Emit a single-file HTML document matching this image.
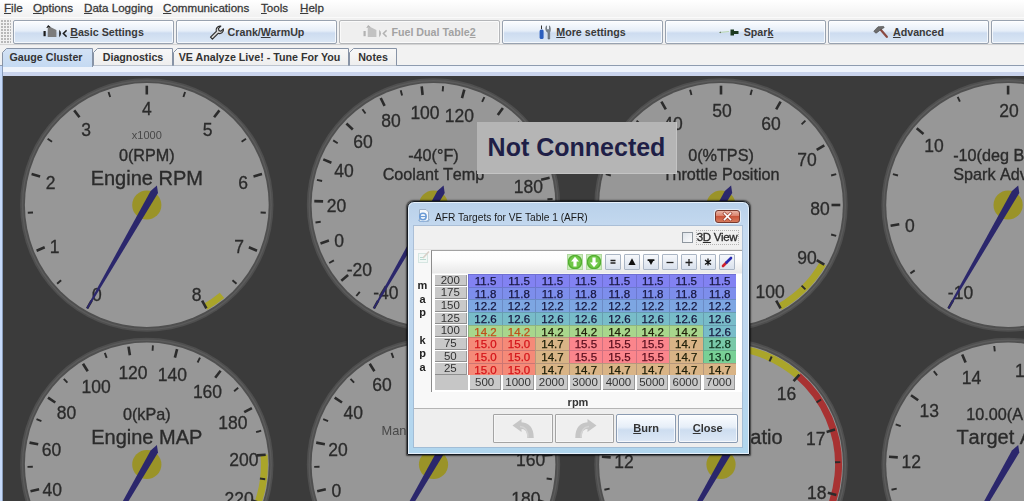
<!DOCTYPE html>
<html lang="en">
<head>
<meta charset="utf-8">
<title>TunerStudio - AFR Targets</title>
<style>
*{box-sizing:border-box;margin:0;padding:0}
html,body{width:1024px;height:501px;overflow:hidden;background:#f0f0f0;font-family:"Liberation Sans",Arial,sans-serif;}
body{position:relative}
u{text-decoration:underline;text-underline-offset:1px}
.abs{position:absolute}
/* menu bar */
#menubar{position:absolute;left:0;top:0;width:1024px;height:17px;background:linear-gradient(#ffffff,#f1f1f1);font-size:11.6px;color:#3a3a3a;-webkit-text-stroke:0.3px #3a3a3a}
#menubar span{position:absolute;top:1px;line-height:14px;white-space:nowrap}
/* toolbar */
#toolbar{position:absolute;left:0;top:17px;width:1024px;height:28px;background:#f1f1f1;border-top:1px solid #fafafa;border-bottom:1px solid #d4d4d4}
#grip{position:absolute;left:1px;top:2px;width:10px;height:24px;background-image:radial-gradient(circle at 1px 1px,#b8b8b8 0.8px,transparent 1px);background-size:3px 3px}
.tbtn{position:absolute;top:2px;height:24px;width:161px;border:1px solid #98a2b0;border-radius:2px;background:linear-gradient(#fbfdff 0%,#e6eef8 45%,#cddcf0 55%,#dbe7f5 100%);font-size:10.7px;font-weight:bold;color:#3a3a3a;line-height:22px;text-align:center;white-space:nowrap;box-shadow:inset 0 0 0 1px rgba(255,255,255,.7)}
.tbtn.dis{color:#a2a2a2;background:#efefef;border-color:#b4b6b9}
.tbtn{display:flex;align-items:center;justify-content:center}
.tbtn svg{flex:none}
/* tabs */
#tabs{position:absolute;left:0;top:46px;width:1024px;height:30px;background:#f2f2f2}
#tabline{position:absolute;left:0;top:19px;width:1024px;height:1px;background:#8e9cb0}
#tabband{position:absolute;left:0;top:20px;width:1024px;height:6px;background:#eef3fb}
#tabband2{position:absolute;left:0;top:26px;width:1024px;height:4px;background:#c9d3ec}
.tab{position:absolute;top:2px;height:18px;border:1px solid transparent;border-bottom:none;font-size:10.7px;font-weight:bold;color:#333;line-height:16px;text-align:center;white-space:nowrap}
.tab.sel{height:19px}
/* content */
#leftedge{position:absolute;left:0;top:66px;width:3px;height:435px;background:linear-gradient(to right,#c6dafa 0,#c6dafa 2px,#8a9dbb 2px)}
#content{position:absolute;left:3px;top:76px;width:1021px;height:425px;background:#3b3b3b;overflow:hidden}
#content svg{position:absolute;left:0;top:0}
#nc{position:absolute;left:477px;top:122px;width:200px;height:52px;background:#b5b5b5;border-right:1px solid #c4c4c4;border-bottom:1px solid #c4c4c4;color:#1f1f47;font-size:25px;font-weight:bold;line-height:50px;text-align:center;white-space:nowrap}
/* dialog */
#dlg{position:absolute;left:407px;top:201px;width:342.5px;height:253.5px;border:1px solid #161b22;border-radius:7px 7px 1px 1px;background:linear-gradient(#b9d1ea 0,#c6daf0 30px,#bcd6ee 60%,#b0d6ee 100%);box-shadow:0 0 1.5px 0.5px rgba(0,0,0,.6), inset 0 0 0 1px #e6f0fa}
#dlg .title{position:absolute;left:27px;top:6.500px;font-size:11.3px;color:#1a1a1a;line-height:16px;white-space:nowrap;transform-origin:0 0;transform:scaleX(.9)}
#xbtn{position:absolute;left:307px;top:8px;width:25px;height:13px;border:1px solid #7a3a2e;border-radius:3px;background:linear-gradient(#e9b5a6 0,#db826c 45%,#c9553b 50%,#d67a5c 100%);box-shadow:0 0 0 1px rgba(255,255,255,.55)}
#xbtn svg{position:absolute;left:-1px;top:-1px}
#client{position:absolute;left:6px;top:24px;width:328px;height:221px;background:#f0f0f0;box-shadow:0 0 0 1px rgba(150,170,195,.55);overflow:hidden}
</style>
</head>
<body>
<div id="menubar">
<span style="left:4px"><u>F</u>ile</span>
<span style="left:33px"><u>O</u>ptions</span>
<span style="left:84px"><u>D</u>ata Logging</span>
<span style="left:163px"><u>C</u>ommunications</span>
<span style="left:261px"><u>T</u>ools</span>
<span style="left:300px"><u>H</u>elp</span>
</div>
<div id="toolbar">
<div id="grip"></div>
<div class="tbtn" style="left:13px"><svg width="24" height="14" viewBox="0 0 24 14"><rect x="0.500" y="6" width="2.200" height="5.200" fill="#1c1c1c"/><path d="M4.700 12V4.800L5.300 0.900L13.400 5V12Z" fill="#7c7c7c"/><path d="M3.800 3L5.300 0.900L7.200 2.400" fill="none" stroke="#1c1c1c" stroke-width="1.100"/><path d="M16.200 4.800Q19.800 8.500 16.200 12.200Z" fill="#1c1c1c"/><path d="M23.600 5.400L20.400 8.500L23.600 11.600" fill="none" stroke="#1c1c1c" stroke-width="1.500"/></svg><span style="margin-left:3px"><u>B</u>asic Settings</span></div>
<div class="tbtn" style="left:176px"><svg width="16" height="16" viewBox="0 0 16 16"><path d="M1.5 13.2L7.3 7.4C6.3 4.6 8.6 1.6 11.8 2.2L9.4 4.6L10 6.6L12 7.2L14.4 4.8C15 8 12 10.300 9.200 9.300L3.400 15.100Z" fill="#d9d9d9" stroke="#2e2e2e" stroke-width="1.2" stroke-linejoin="round"/></svg><span style="margin-left:3px">Crank/<u>W</u>armUp</span></div>
<div class="tbtn dis" style="left:339px"><svg width="24" height="14" viewBox="0 0 24 14"><rect x="0.500" y="6" width="2.200" height="5.200" fill="#b2b2b2"/><path d="M4.700 12V4.800L5.300 0.900L13.400 5V12Z" fill="#c2c2c2"/><path d="M3.800 3L5.300 0.900L7.200 2.400" fill="none" stroke="#b2b2b2" stroke-width="1.100"/><path d="M16.200 4.800Q19.800 8.500 16.200 12.200Z" fill="#b2b2b2"/><path d="M23.600 5.400L20.400 8.500L23.600 11.600" fill="none" stroke="#b2b2b2" stroke-width="1.500"/></svg><span style="margin-left:4px">Fuel Dual Table<u>2</u></span></div>
<div class="tbtn" style="left:502px"><svg width="13" height="15" viewBox="0 0 13 15"><path d="M2.5 0.500V4" stroke="#333" stroke-width="1"/><rect x="0.6" y="4.500" width="4" height="9.500" rx="1.5" fill="#2c5fbe"/><path d="M9 14V7.500C6.500 6.500 6.200 3 7.500 0.800V4L9 5L10.500 4V0.800C11.800 3 11.500 6.500 10.700 7.500V14Z" fill="#7d8790" stroke="#4a525a" stroke-width="0.500"/></svg><span style="margin-left:4px"><u>M</u>ore settings</span></div>
<div class="tbtn" style="left:665px"><svg width="22" height="10" viewBox="0 0 22 10"><path d="M1.5 5.500L11 4.500" stroke="#b9d6b0" stroke-width="1.200"/><path d="M1 5.600L3 4.600V6.300Z" fill="#6b7a66"/><path d="M12.500 2.500H16V4H20.500V7H16V8.500H12.500Z" fill="#1d3a1f"/></svg><span style="margin-left:4px">Spar<u>k</u></span></div>
<div class="tbtn" style="left:828px"><svg width="15" height="14" viewBox="0 0 15 14"><path d="M7.500 4.500L13.800 11.800" stroke="#8a4a42" stroke-width="2.200" stroke-linecap="round"/><path d="M0.800 6.200L5 1.800L10.500 1.400L11.200 2.600L7.800 4.600L4.600 7.200L2.800 8.200Z" fill="#6d6d6d" stroke="#444" stroke-width="0.600"/></svg><span style="margin-left:5px"><u>A</u>dvanced</span></div>
<div class="tbtn" style="left:991px"></div>
</div>
<div id="tabs">
<div id="tabline"></div><div id="tabband"></div><div id="tabband2"></div>
<svg style="position:absolute;left:0;top:0" width="420" height="24" viewBox="0 0 420 24"><defs><linearGradient id="tsel" x1="0" y1="0" x2="0" y2="1"><stop offset="0" stop-color="#d3e2f5"/><stop offset="1" stop-color="#c4d9f2"/></linearGradient><linearGradient id="tun" x1="0" y1="0" x2="0" y2="1"><stop offset="0" stop-color="#f8f8f8"/><stop offset="1" stop-color="#eeeeee"/></linearGradient></defs><path d="M2.5 21V6.500L6.5 2.500H92.5V21" fill="url(#tsel)" stroke="#8793a6" stroke-width="1"/><path d="M93.5 19.5V6.500L97.5 2.500H172.5V19.5" fill="url(#tun)" stroke="#8793a6" stroke-width="1"/><path d="M173.5 19.5V6.500L177.5 2.500H348.5V19.5" fill="url(#tun)" stroke="#8793a6" stroke-width="1"/><path d="M349.5 19.5V6.500L353.5 2.500H396.5V19.5" fill="url(#tun)" stroke="#8793a6" stroke-width="1"/></svg>
<div class="tab sel" style="left:1px;width:90px">Gauge Cluster</div>
<div class="tab" style="left:93px;width:80px">Diagnostics</div>
<div class="tab" style="left:172px;width:175px">VE Analyze Live! - Tune For You</div>
<div class="tab" style="left:349px;width:48px">Notes</div>
</div>
<div id="leftedge"></div>
<div id="content">
<svg id="gauges" width="1021" height="425" viewBox="3 76 1021 425" font-family="'Liberation Sans', Arial, sans-serif" stroke-width="0" style="will-change:transform;font-kerning:none">
<circle cx="146.8" cy="205" r="126.7" fill="#4f4f4f"/>
<circle cx="146.8" cy="205" r="124.3" fill="none" stroke="#5b5b5b" stroke-width="1.4"/>
<circle cx="146.8" cy="205" r="121.9" fill="#979797"/>
<path d="M222.0 295.4A117.6 117.6 0 0 1 205.6 306.8" fill="none" stroke="#aaa52a" stroke-width="7"/>
<g stroke="#2b2b2b" stroke-linecap="butt"><line x1="91.6" y1="300.7" x2="87.2" y2="308.3" stroke-width="2.6"/><line x1="61.1" y1="280.2" x2="57.1" y2="283.7" stroke-width="1.9"/><line x1="44.7" y1="247.3" x2="36.6" y2="250.7" stroke-width="2.6"/><line x1="33.0" y1="212.5" x2="27.8" y2="212.8" stroke-width="1.9"/><line x1="40.1" y1="176.4" x2="31.6" y2="174.1" stroke-width="2.6"/><line x1="52.0" y1="141.7" x2="47.6" y2="138.7" stroke-width="1.9"/><line x1="79.5" y1="117.3" x2="74.2" y2="110.4" stroke-width="2.6"/><line x1="110.2" y1="97.0" x2="108.5" y2="92.0" stroke-width="1.9"/><line x1="146.8" y1="94.5" x2="146.8" y2="85.7" stroke-width="2.6"/><line x1="183.4" y1="97.0" x2="185.1" y2="92.0" stroke-width="1.9"/><line x1="214.1" y1="117.3" x2="219.4" y2="110.4" stroke-width="2.6"/><line x1="241.6" y1="141.7" x2="246.0" y2="138.7" stroke-width="1.9"/><line x1="253.5" y1="176.4" x2="262.0" y2="174.1" stroke-width="2.6"/><line x1="260.6" y1="212.5" x2="265.8" y2="212.8" stroke-width="1.9"/><line x1="248.9" y1="247.3" x2="257.0" y2="250.7" stroke-width="2.6"/><line x1="232.5" y1="280.2" x2="236.5" y2="283.7" stroke-width="1.9"/><line x1="202.1" y1="300.7" x2="206.4" y2="308.3" stroke-width="2.6"/></g>
<g font-size="17.5" text-anchor="middle" fill="#2b2b2b" stroke="#2b2b2b" stroke-width="0.3"><text x="96.9" y="301.0">0</text><text x="54.6" y="252.8">1</text><text x="50.5" y="188.8">2</text><text x="86.1" y="135.5">3</text><text x="146.8" y="114.9">4</text><text x="207.5" y="135.5">5</text><text x="243.1" y="188.8">6</text><text x="239.0" y="252.8">7</text><text x="196.7" y="301.0">8</text></g>
<text x="146.8" y="138.8" font-size="11" text-anchor="middle" fill="#484848">x1000</text>
<text x="146.8" y="160.8" font-size="16.2" text-anchor="middle" fill="#2b2b2b" stroke="#2b2b2b" stroke-width="0.35">0(RPM)</text>
<text x="146.8" y="184.7" font-size="20" text-anchor="middle" fill="#2b2b2b" stroke="#2b2b2b" stroke-width="0.35">Engine RPM</text>
<circle cx="146.8" cy="205" r="14.6" fill="#9a9328"/>
<polygon points="86.4,308.1 150.6,191.0 156.9,185.4 158.0,193.0 87.7,308.9" fill="#2b276c"/>
<circle cx="433.5" cy="205" r="126.7" fill="#4f4f4f"/>
<circle cx="433.5" cy="205" r="124.3" fill="none" stroke="#5b5b5b" stroke-width="1.4"/>
<circle cx="433.5" cy="205" r="121.9" fill="#979797"/>
<g stroke="#2b2b2b" stroke-linecap="butt"><line x1="378.2" y1="300.7" x2="373.9" y2="308.3" stroke-width="2.6"/><line x1="359.8" y1="291.9" x2="356.3" y2="296.0" stroke-width="1.9"/><line x1="348.1" y1="275.1" x2="341.3" y2="280.7" stroke-width="2.6"/><line x1="333.9" y1="260.4" x2="329.2" y2="263.0" stroke-width="1.9"/><line x1="328.9" y1="240.5" x2="320.5" y2="243.4" stroke-width="2.6"/><line x1="320.7" y1="221.8" x2="315.5" y2="222.5" stroke-width="1.9"/><line x1="323.1" y1="201.4" x2="314.3" y2="201.1" stroke-width="2.6"/><line x1="322.1" y1="181.0" x2="316.9" y2="179.9" stroke-width="1.9"/><line x1="331.4" y1="162.8" x2="323.3" y2="159.4" stroke-width="2.6"/><line x1="337.7" y1="143.3" x2="333.2" y2="140.4" stroke-width="1.9"/><line x1="352.8" y1="129.5" x2="346.4" y2="123.5" stroke-width="2.6"/><line x1="365.5" y1="113.5" x2="362.4" y2="109.2" stroke-width="1.9"/><line x1="384.6" y1="105.9" x2="380.7" y2="98.0" stroke-width="2.6"/><line x1="402.1" y1="95.4" x2="400.7" y2="90.3" stroke-width="1.9"/><line x1="422.6" y1="95.0" x2="421.7" y2="86.3" stroke-width="2.6"/><line x1="442.7" y1="91.4" x2="443.1" y2="86.1" stroke-width="1.9"/><line x1="462.0" y1="98.2" x2="464.3" y2="89.7" stroke-width="2.6"/><line x1="482.1" y1="101.9" x2="484.4" y2="97.1" stroke-width="1.9"/><line x1="497.8" y1="115.1" x2="502.9" y2="108.0" stroke-width="2.6"/><line x1="515.3" y1="125.6" x2="519.1" y2="121.9" stroke-width="1.9"/><line x1="525.3" y1="143.5" x2="532.6" y2="138.6" stroke-width="2.6"/><line x1="538.0" y1="159.5" x2="542.9" y2="157.4" stroke-width="1.9"/><line x1="541.1" y1="179.8" x2="549.6" y2="177.8" stroke-width="2.6"/><line x1="547.4" y1="199.3" x2="552.6" y2="199.0" stroke-width="1.9"/><line x1="543.1" y1="219.3" x2="551.8" y2="220.4" stroke-width="2.6"/><line x1="542.1" y1="239.7" x2="547.1" y2="241.3" stroke-width="1.9"/><line x1="531.0" y1="256.9" x2="538.8" y2="261.1" stroke-width="2.6"/><line x1="522.9" y1="275.7" x2="527.1" y2="279.0" stroke-width="1.9"/><line x1="506.5" y1="288.0" x2="512.3" y2="294.6" stroke-width="2.6"/><line x1="492.3" y1="302.7" x2="495.0" y2="307.2" stroke-width="1.9"/></g>
<g font-size="17.5" text-anchor="middle" fill="#2b2b2b" stroke="#2b2b2b" stroke-width="0.3"><text x="385.9" y="298.8">-40</text><text x="359.4" y="276.3">-20</text><text x="339.1" y="246.7">0</text><text x="336.5" y="211.5">20</text><text x="343.9" y="177.2">40</text><text x="362.9" y="147.7">60</text><text x="391.1" y="126.7">80</text><text x="425.0" y="118.7">100</text><text x="459.4" y="121.5">120</text><text x="490.6" y="136.2">140</text><text x="514.6" y="161.0">160</text><text x="528.4" y="192.7">180</text><text x="530.1" y="227.1">200</text><text x="519.6" y="260.0">220</text><text x="498.2" y="287.1">240</text></g>
<text x="433.5" y="160.8" font-size="16.2" text-anchor="middle" fill="#2b2b2b" stroke="#2b2b2b" stroke-width="0.35">-40(°F)</text>
<text x="433.5" y="179.8" font-size="16.2" text-anchor="middle" fill="#2b2b2b" stroke="#2b2b2b" stroke-width="0.35">Coolant Temp</text>
<circle cx="433.5" cy="205" r="14.6" fill="#9a9328"/>
<polygon points="373.1,308.1 437.3,191.0 443.6,185.4 444.7,193.0 374.4,308.9" fill="#2b276c"/>
<circle cx="721.0" cy="205" r="126.7" fill="#4f4f4f"/>
<circle cx="721.0" cy="205" r="124.3" fill="none" stroke="#5b5b5b" stroke-width="1.4"/>
<circle cx="721.0" cy="205" r="121.9" fill="#979797"/>
<path d="M822.8 263.8A117.6 117.6 0 0 1 779.8 306.8" fill="none" stroke="#aaa52a" stroke-width="7"/>
<g stroke="#2b2b2b" stroke-linecap="butt"><line x1="665.8" y1="300.7" x2="661.4" y2="308.3" stroke-width="2.6"/><line x1="640.4" y1="285.6" x2="636.6" y2="289.4" stroke-width="1.9"/><line x1="625.3" y1="260.2" x2="617.7" y2="264.6" stroke-width="2.6"/><line x1="610.9" y1="234.5" x2="605.8" y2="235.9" stroke-width="1.9"/><line x1="610.5" y1="205.0" x2="601.7" y2="205.0" stroke-width="2.6"/><line x1="610.9" y1="175.5" x2="605.8" y2="174.1" stroke-width="1.9"/><line x1="625.3" y1="149.8" x2="617.7" y2="145.3" stroke-width="2.6"/><line x1="640.4" y1="124.4" x2="636.6" y2="120.6" stroke-width="1.9"/><line x1="665.8" y1="109.3" x2="661.4" y2="101.7" stroke-width="2.6"/><line x1="691.5" y1="94.9" x2="690.1" y2="89.8" stroke-width="1.9"/><line x1="721.0" y1="94.5" x2="721.0" y2="85.7" stroke-width="2.6"/><line x1="750.5" y1="94.9" x2="751.9" y2="89.8" stroke-width="1.9"/><line x1="776.2" y1="109.3" x2="780.6" y2="101.7" stroke-width="2.6"/><line x1="801.6" y1="124.4" x2="805.4" y2="120.6" stroke-width="1.9"/><line x1="816.7" y1="149.8" x2="824.3" y2="145.3" stroke-width="2.6"/><line x1="831.1" y1="175.5" x2="836.2" y2="174.1" stroke-width="1.9"/><line x1="831.5" y1="205.0" x2="840.3" y2="205.0" stroke-width="2.6"/><line x1="831.1" y1="234.5" x2="836.2" y2="235.9" stroke-width="1.9"/><line x1="816.7" y1="260.2" x2="824.3" y2="264.6" stroke-width="2.6"/><line x1="801.6" y1="285.6" x2="805.4" y2="289.4" stroke-width="1.9"/><line x1="776.2" y1="300.7" x2="780.6" y2="308.3" stroke-width="2.6"/></g>
<g font-size="17.5" text-anchor="middle" fill="#2b2b2b" stroke="#2b2b2b" stroke-width="0.3"><text x="671.1" y="301.0">0</text><text x="637.1" y="263.7">10</text><text x="623.9" y="214.7">20</text><text x="637.1" y="165.6">30</text><text x="673.0" y="129.7">40</text><text x="722.0" y="116.6">50</text><text x="771.0" y="129.7">60</text><text x="806.9" y="165.6">70</text><text x="820.1" y="214.7">80</text><text x="806.9" y="263.7">90</text><text x="770.2" y="298.2">100</text></g>
<text x="721.0" y="160.8" font-size="16.2" text-anchor="middle" fill="#2b2b2b" stroke="#2b2b2b" stroke-width="0.35">0(%TPS)</text>
<text x="721.0" y="179.8" font-size="16.2" text-anchor="middle" fill="#2b2b2b" stroke="#2b2b2b" stroke-width="0.35">Throttle Position</text>
<circle cx="721.0" cy="205" r="14.6" fill="#9a9328"/>
<polygon points="660.6,308.1 724.8,191.0 731.1,185.4 732.2,193.0 661.9,308.9" fill="#2b276c"/>
<circle cx="1008.1" cy="205" r="126.7" fill="#4f4f4f"/>
<circle cx="1008.1" cy="205" r="124.3" fill="none" stroke="#5b5b5b" stroke-width="1.4"/>
<circle cx="1008.1" cy="205" r="121.9" fill="#979797"/>
<g stroke="#2b2b2b" stroke-linecap="butt"><line x1="952.9" y1="300.7" x2="948.5" y2="308.3" stroke-width="2.6"/><line x1="914.7" y1="270.4" x2="910.4" y2="273.4" stroke-width="1.9"/><line x1="899.3" y1="224.2" x2="890.6" y2="225.7" stroke-width="2.6"/><line x1="898.0" y1="175.5" x2="892.9" y2="174.1" stroke-width="1.9"/><line x1="923.5" y1="134.0" x2="916.7" y2="128.3" stroke-width="2.6"/><line x1="959.9" y1="101.7" x2="957.7" y2="96.9" stroke-width="1.9"/><line x1="1008.1" y1="94.5" x2="1008.1" y2="85.7" stroke-width="2.6"/><line x1="1056.3" y1="101.7" x2="1058.5" y2="96.9" stroke-width="1.9"/><line x1="1092.7" y1="134.0" x2="1099.5" y2="128.3" stroke-width="2.6"/><line x1="1118.2" y1="175.5" x2="1123.3" y2="174.1" stroke-width="1.9"/><line x1="1116.9" y1="224.2" x2="1125.6" y2="225.7" stroke-width="2.6"/><line x1="1101.5" y1="270.4" x2="1105.8" y2="273.4" stroke-width="1.9"/><line x1="1063.3" y1="300.7" x2="1067.8" y2="308.3" stroke-width="2.6"/></g>
<g font-size="17.5" text-anchor="middle" fill="#2b2b2b" stroke="#2b2b2b" stroke-width="0.3"><text x="960.5" y="298.8">-10</text><text x="909.9" y="232.0">0</text><text x="934.0" y="151.6">10</text><text x="1009.1" y="116.6">20</text><text x="1084.2" y="151.6">30</text><text x="1105.7" y="231.7">40</text><text x="1058.1" y="299.6">50</text></g>
<text x="1008.1" y="160.8" font-size="16.2" text-anchor="middle" fill="#2b2b2b" stroke="#2b2b2b" stroke-width="0.35">-10(deg BTDC)</text>
<text x="1008.1" y="179.8" font-size="16.2" text-anchor="middle" fill="#2b2b2b" stroke="#2b2b2b" stroke-width="0.35">Spark Advance</text>
<circle cx="1008.1" cy="205" r="14.6" fill="#9a9328"/>
<polygon points="947.7,308.1 1011.9,191.0 1018.2,185.4 1019.3,193.0 949.0,308.9" fill="#2b276c"/>
<circle cx="146.8" cy="464.5" r="126.7" fill="#4f4f4f"/>
<circle cx="146.8" cy="464.5" r="124.3" fill="none" stroke="#5b5b5b" stroke-width="1.4"/>
<circle cx="146.8" cy="464.5" r="121.9" fill="#979797"/>
<path d="M264.0 454.9A117.6 117.6 0 0 1 215.7 559.8" fill="none" stroke="#aaa52a" stroke-width="7"/>
<g stroke="#2b2b2b" stroke-linecap="butt"><line x1="91.6" y1="560.2" x2="87.2" y2="567.8" stroke-width="2.6"/><line x1="70.9" y1="549.5" x2="67.3" y2="553.5" stroke-width="1.9"/><line x1="57.9" y1="530.2" x2="50.9" y2="535.4" stroke-width="2.6"/><line x1="43.2" y1="512.1" x2="38.4" y2="514.4" stroke-width="1.9"/><line x1="39.1" y1="489.2" x2="30.5" y2="491.2" stroke-width="2.6"/><line x1="32.8" y1="466.8" x2="27.5" y2="466.9" stroke-width="1.9"/><line x1="38.2" y1="444.2" x2="29.5" y2="442.6" stroke-width="2.6"/><line x1="41.4" y1="421.1" x2="36.5" y2="419.1" stroke-width="1.9"/><line x1="55.3" y1="402.5" x2="48.0" y2="397.6" stroke-width="2.6"/><line x1="67.4" y1="382.7" x2="63.8" y2="378.9" stroke-width="1.9"/><line x1="87.7" y1="371.2" x2="83.0" y2="363.7" stroke-width="2.6"/><line x1="106.7" y1="357.8" x2="104.8" y2="352.8" stroke-width="1.9"/><line x1="129.9" y1="355.3" x2="128.5" y2="346.6" stroke-width="2.6"/><line x1="152.6" y1="350.7" x2="152.9" y2="345.4" stroke-width="1.9"/><line x1="174.9" y1="357.6" x2="177.1" y2="349.1" stroke-width="2.6"/><line x1="197.6" y1="362.5" x2="200.0" y2="357.7" stroke-width="1.9"/><line x1="215.2" y1="377.7" x2="220.6" y2="370.8" stroke-width="2.6"/><line x1="234.1" y1="391.2" x2="238.2" y2="387.8" stroke-width="1.9"/><line x1="244.2" y1="412.2" x2="251.9" y2="408.1" stroke-width="2.6"/><line x1="256.1" y1="432.2" x2="261.2" y2="430.7" stroke-width="1.9"/><line x1="256.9" y1="455.4" x2="265.7" y2="454.7" stroke-width="2.6"/><line x1="259.9" y1="478.5" x2="265.2" y2="479.2" stroke-width="1.9"/><line x1="251.4" y1="500.2" x2="259.7" y2="503.0" stroke-width="2.6"/><line x1="244.9" y1="522.5" x2="249.5" y2="525.2" stroke-width="1.9"/><line x1="228.5" y1="538.9" x2="235.0" y2="544.9" stroke-width="2.6"/><line x1="213.6" y1="556.9" x2="216.7" y2="561.2" stroke-width="1.9"/></g>
<g font-size="17.5" text-anchor="middle" fill="#2b2b2b" stroke="#2b2b2b" stroke-width="0.3"><text x="96.9" y="560.5">0</text><text x="68.9" y="532.5">20</text><text x="52.2" y="496.1">40</text><text x="51.4" y="456.1">60</text><text x="66.6" y="419.1">80</text><text x="96.2" y="392.7">100</text><text x="133.0" y="378.9">120</text><text x="172.3" y="380.9">140</text><text x="207.5" y="398.4">160</text><text x="232.8" y="428.5">180</text><text x="243.9" y="466.3">200</text><text x="239.1" y="505.3">220</text><text x="219.1" y="539.1">240</text></g>
<text x="146.8" y="420.3" font-size="16.2" text-anchor="middle" fill="#2b2b2b" stroke="#2b2b2b" stroke-width="0.35">0(kPa)</text>
<text x="146.8" y="443.5" font-size="20" text-anchor="middle" fill="#2b2b2b" stroke="#2b2b2b" stroke-width="0.35">Engine MAP</text>
<circle cx="146.8" cy="464.5" r="14.6" fill="#9a9328"/>
<polygon points="86.4,567.6 150.6,450.5 156.9,444.9 158.0,452.5 87.7,568.4" fill="#2b276c"/>
<circle cx="433.5" cy="464.5" r="126.7" fill="#4f4f4f"/>
<circle cx="433.5" cy="464.5" r="124.3" fill="none" stroke="#5b5b5b" stroke-width="1.4"/>
<circle cx="433.5" cy="464.5" r="121.9" fill="#979797"/>
<g stroke="#2b2b2b" stroke-linecap="butt"><line x1="378.2" y1="560.2" x2="373.9" y2="567.8" stroke-width="2.6"/><line x1="357.6" y1="549.5" x2="354.0" y2="553.5" stroke-width="1.9"/><line x1="344.6" y1="530.2" x2="337.6" y2="535.4" stroke-width="2.6"/><line x1="329.9" y1="512.1" x2="325.1" y2="514.4" stroke-width="1.9"/><line x1="325.8" y1="489.2" x2="317.2" y2="491.2" stroke-width="2.6"/><line x1="319.5" y1="466.8" x2="314.2" y2="466.9" stroke-width="1.9"/><line x1="324.9" y1="444.2" x2="316.2" y2="442.6" stroke-width="2.6"/><line x1="328.1" y1="421.1" x2="323.2" y2="419.1" stroke-width="1.9"/><line x1="342.0" y1="402.5" x2="334.7" y2="397.6" stroke-width="2.6"/><line x1="354.1" y1="382.7" x2="350.5" y2="378.9" stroke-width="1.9"/><line x1="374.4" y1="371.2" x2="369.7" y2="363.7" stroke-width="2.6"/><line x1="393.4" y1="357.8" x2="391.5" y2="352.8" stroke-width="1.9"/><line x1="416.6" y1="355.3" x2="415.2" y2="346.6" stroke-width="2.6"/><line x1="439.3" y1="350.7" x2="439.6" y2="345.4" stroke-width="1.9"/><line x1="461.6" y1="357.6" x2="463.8" y2="349.1" stroke-width="2.6"/><line x1="484.3" y1="362.5" x2="486.7" y2="357.7" stroke-width="1.9"/><line x1="501.9" y1="377.7" x2="507.3" y2="370.8" stroke-width="2.6"/><line x1="520.8" y1="391.2" x2="524.9" y2="387.8" stroke-width="1.9"/><line x1="530.9" y1="412.2" x2="538.6" y2="408.1" stroke-width="2.6"/><line x1="542.8" y1="432.2" x2="547.9" y2="430.7" stroke-width="1.9"/><line x1="543.6" y1="455.4" x2="552.4" y2="454.7" stroke-width="2.6"/><line x1="546.6" y1="478.5" x2="551.9" y2="479.2" stroke-width="1.9"/><line x1="538.1" y1="500.2" x2="546.4" y2="503.0" stroke-width="2.6"/><line x1="531.6" y1="522.5" x2="536.2" y2="525.2" stroke-width="1.9"/><line x1="515.2" y1="538.9" x2="521.7" y2="544.9" stroke-width="2.6"/><line x1="500.3" y1="556.9" x2="503.4" y2="561.2" stroke-width="1.9"/></g>
<g font-size="17.5" text-anchor="middle" fill="#2b2b2b" stroke="#2b2b2b" stroke-width="0.3"><text x="385.9" y="558.3">-40</text><text x="356.4" y="531.9">-20</text><text x="336.3" y="496.5">0</text><text x="338.1" y="456.1">20</text><text x="353.3" y="419.1">40</text><text x="382.0" y="391.3">60</text><text x="419.5" y="377.2">80</text><text x="459.0" y="380.9">100</text><text x="494.2" y="398.4">120</text><text x="519.5" y="428.5">140</text><text x="530.6" y="466.3">160</text><text x="525.8" y="505.3">180</text><text x="505.8" y="539.1">200</text></g>
<text x="433.5" y="420.3" font-size="16.2" text-anchor="middle" fill="#2b2b2b" stroke="#2b2b2b" stroke-width="0.35">-40(°F)</text>
<text x="433.5" y="435.0" font-size="12.8" text-anchor="middle" fill="#484848">Manifold Air Temp</text>
<circle cx="433.5" cy="464.5" r="14.6" fill="#9a9328"/>
<polygon points="373.1,567.6 437.3,450.5 443.6,444.9 444.7,452.5 374.4,568.4" fill="#2b276c"/>
<circle cx="721.0" cy="464.5" r="126.7" fill="#4f4f4f"/>
<circle cx="721.0" cy="464.5" r="124.3" fill="none" stroke="#5b5b5b" stroke-width="1.4"/>
<circle cx="721.0" cy="464.5" r="121.9" fill="#979797"/>
<path d="M739.9 348.4A117.6 117.6 0 0 1 798.3 375.9" fill="none" stroke="#aaa52a" stroke-width="7"/>
<path d="M798.3 375.9A117.6 117.6 0 0 1 779.8 566.3" fill="none" stroke="#a83232" stroke-width="7"/>
<g stroke="#2b2b2b" stroke-linecap="butt"><line x1="665.8" y1="560.2" x2="661.4" y2="567.8" stroke-width="2.6"/><line x1="639.1" y1="543.8" x2="635.3" y2="547.5" stroke-width="1.9"/><line x1="623.6" y1="516.6" x2="615.8" y2="520.8" stroke-width="2.6"/><line x1="609.6" y1="488.6" x2="604.4" y2="489.8" stroke-width="1.9"/><line x1="610.7" y1="457.4" x2="601.9" y2="456.8" stroke-width="2.6"/><line x1="613.6" y1="426.2" x2="608.6" y2="424.4" stroke-width="1.9"/><line x1="631.1" y1="400.3" x2="623.9" y2="395.2" stroke-width="2.6"/><line x1="650.0" y1="375.3" x2="646.7" y2="371.2" stroke-width="1.9"/><line x1="678.5" y1="362.5" x2="675.1" y2="354.4" stroke-width="2.6"/><line x1="707.7" y1="351.3" x2="707.1" y2="346.0" stroke-width="1.9"/><line x1="738.7" y1="355.4" x2="740.1" y2="346.7" stroke-width="2.6"/><line x1="769.5" y1="361.3" x2="771.7" y2="356.5" stroke-width="1.9"/><line x1="793.6" y1="381.2" x2="799.4" y2="374.6" stroke-width="2.6"/><line x1="816.6" y1="402.4" x2="821.1" y2="399.5" stroke-width="1.9"/><line x1="826.6" y1="432.1" x2="835.0" y2="429.5" stroke-width="2.6"/><line x1="835.0" y1="462.2" x2="840.3" y2="462.1" stroke-width="1.9"/><line x1="827.8" y1="492.7" x2="836.4" y2="494.9" stroke-width="2.6"/><line x1="819.0" y1="522.7" x2="823.6" y2="525.4" stroke-width="1.9"/><line x1="796.9" y1="544.8" x2="802.9" y2="551.2" stroke-width="2.6"/></g>
<g font-size="17.5" text-anchor="middle" fill="#2b2b2b" stroke="#2b2b2b" stroke-width="0.3"><text x="673.0" y="559.1">10</text><text x="635.5" y="520.4">11</text><text x="624.1" y="467.8">12</text><text x="642.2" y="417.1">13</text><text x="684.3" y="383.6">14</text><text x="737.7" y="377.3">15</text><text x="786.5" y="400.2">16</text><text x="815.8" y="445.4">17</text><text x="816.8" y="499.2">18</text><text x="789.4" y="545.5">19</text></g>
<text x="721.0" y="420.3" font-size="16.2" text-anchor="middle" fill="#2b2b2b" stroke="#2b2b2b" stroke-width="0.35">10.0(:1)</text>
<text x="722.0" y="444.2" font-size="20" text-anchor="middle" fill="#2b2b2b" stroke="#2b2b2b" stroke-width="0.35">Air:Fuel Ratio</text>
<circle cx="721.0" cy="464.5" r="14.6" fill="#9a9328"/>
<polygon points="660.6,567.6 724.8,450.5 731.1,444.9 732.2,452.5 661.9,568.4" fill="#2b276c"/>
<circle cx="1008.1" cy="464.5" r="126.7" fill="#4f4f4f"/>
<circle cx="1008.1" cy="464.5" r="124.3" fill="none" stroke="#5b5b5b" stroke-width="1.4"/>
<circle cx="1008.1" cy="464.5" r="121.9" fill="#979797"/>
<g stroke="#2b2b2b" stroke-linecap="butt"><line x1="952.9" y1="560.2" x2="948.5" y2="567.8" stroke-width="2.6"/><line x1="926.2" y1="543.8" x2="922.4" y2="547.5" stroke-width="1.9"/><line x1="910.7" y1="516.6" x2="902.9" y2="520.8" stroke-width="2.6"/><line x1="896.7" y1="488.6" x2="891.5" y2="489.8" stroke-width="1.9"/><line x1="897.8" y1="457.4" x2="889.0" y2="456.8" stroke-width="2.6"/><line x1="900.7" y1="426.2" x2="895.7" y2="424.4" stroke-width="1.9"/><line x1="918.2" y1="400.3" x2="911.0" y2="395.2" stroke-width="2.6"/><line x1="937.1" y1="375.3" x2="933.8" y2="371.2" stroke-width="1.9"/><line x1="965.6" y1="362.5" x2="962.2" y2="354.4" stroke-width="2.6"/><line x1="994.8" y1="351.3" x2="994.2" y2="346.0" stroke-width="1.9"/><line x1="1025.8" y1="355.4" x2="1027.2" y2="346.7" stroke-width="2.6"/><line x1="1056.6" y1="361.3" x2="1058.8" y2="356.5" stroke-width="1.9"/><line x1="1080.7" y1="381.2" x2="1086.5" y2="374.6" stroke-width="2.6"/><line x1="1103.7" y1="402.4" x2="1108.2" y2="399.5" stroke-width="1.9"/><line x1="1113.7" y1="432.1" x2="1122.1" y2="429.5" stroke-width="2.6"/><line x1="1122.1" y1="462.2" x2="1127.4" y2="462.1" stroke-width="1.9"/><line x1="1114.9" y1="492.7" x2="1123.5" y2="494.9" stroke-width="2.6"/><line x1="1106.1" y1="522.7" x2="1110.7" y2="525.4" stroke-width="1.9"/><line x1="1084.0" y1="544.8" x2="1090.0" y2="551.2" stroke-width="2.6"/></g>
<g font-size="17.5" text-anchor="middle" fill="#2b2b2b" stroke="#2b2b2b" stroke-width="0.3"><text x="960.1" y="559.1">10</text><text x="922.6" y="520.4">11</text><text x="911.2" y="467.8">12</text><text x="929.3" y="417.1">13</text><text x="971.4" y="383.6">14</text><text x="1024.8" y="377.3">15</text><text x="1073.6" y="400.2">16</text><text x="1102.9" y="445.4">17</text><text x="1103.9" y="499.2">18</text><text x="1076.5" y="545.5">19</text></g>
<text x="1008.1" y="420.3" font-size="16.2" text-anchor="middle" fill="#2b2b2b" stroke="#2b2b2b" stroke-width="0.35">10.00(AFR)</text>
<text x="1008.1" y="444.2" font-size="20" text-anchor="middle" fill="#2b2b2b" stroke="#2b2b2b" stroke-width="0.35">Target AFR</text>
<polygon points="947.7,567.6 1011.9,450.5 1018.2,444.9 1019.3,452.5 949.0,568.4" fill="#2b276c"/>
</svg>
</div>
<div id="nc">Not Connected</div>
<div id="dlg">
<svg style="position:absolute;left:9px;top:7px" width="14" height="14" viewBox="0 0 14 14"><path d="M2.500 0.500H9L11.500 3V12.500H2.500Z" fill="#f4f8fc" stroke="#9fb2c8"/><circle cx="6" cy="7.500" r="3.200" fill="none" stroke="#6b9bd6" stroke-width="1.500"/><path d="M3 7.500H9" stroke="#6b9bd6" stroke-width="1.100"/><path d="M1 11Q6 14.500 13 10.500" fill="none" stroke="#8fb4de" stroke-width="1"/></svg>
<div class="title">AFR Targets for VE Table 1 (AFR)</div>
<div id="xbtn"><svg width="25" height="13" viewBox="0 0 25 13"><path d="M9.500 3.500L15.500 9.500M15.500 3.500L9.500 9.500" stroke="#9a4030" stroke-width="3" stroke-linecap="square"/><path d="M9.500 3.500L15.500 9.500M15.500 3.500L9.500 9.500" stroke="#ffffff" stroke-width="1.600" stroke-linecap="square"/></svg></div>
<div id="client">
<div style="position:absolute;left:0.0px;top:23.0px;width:328.0px;height:159.0px;background:#f8f8f8;border-top:1px solid #e4e4e4"></div>
<div style="position:absolute;left:0.0px;top:182.0px;width:328.0px;height:40.0px;background:#eeeeee;border-top:1px solid #b4b4b4"></div>
<div style="position:absolute;left:268.0px;top:6.0px;width:11.0px;height:11.0px;border:1px solid #8f979f;background:linear-gradient(135deg,#dfe4ea,#fbfcfd)"></div>
<div style="position:absolute;left:281.5px;top:4.0px;width:43.0px;height:15.0px;border:1px dotted #b4b4b4;font-size:11.5px;letter-spacing:-0.3px;line-height:13px;color:#2a2a2a;-webkit-text-stroke:0.3px #2a2a2a;text-align:center;white-space:nowrap">3<u>D</u> View</div>
<svg style="position:absolute;left:3px;top:24px" width="14" height="14" viewBox="0 0 14 14"><rect x="1.5" y="3.5" width="9" height="9" fill="#f2f8f6" stroke="#d6e6e2"/><path d="M3 9.5h6M3 7.5h4" stroke="#b9d9d0" stroke-width="1"/><path d="M6 8L12 1.5" stroke="#d8cfc8" stroke-width="1.6"/></svg>
<div style="position:absolute;left:1.0px;top:51.8px;width:15.0px;height:14.0px;font-size:11px;font-weight:bold;color:#222;text-align:center;line-height:14px">m</div>
<div style="position:absolute;left:1.0px;top:65.5px;width:15.0px;height:14.0px;font-size:11px;font-weight:bold;color:#222;text-align:center;line-height:14px">a</div>
<div style="position:absolute;left:1.0px;top:79.2px;width:15.0px;height:14.0px;font-size:11px;font-weight:bold;color:#222;text-align:center;line-height:14px">p</div>
<div style="position:absolute;left:1.0px;top:106.6px;width:15.0px;height:14.0px;font-size:11px;font-weight:bold;color:#222;text-align:center;line-height:14px">k</div>
<div style="position:absolute;left:1.0px;top:119.7px;width:15.0px;height:14.0px;font-size:11px;font-weight:bold;color:#222;text-align:center;line-height:14px">p</div>
<div style="position:absolute;left:1.0px;top:133.6px;width:15.0px;height:14.0px;font-size:11px;font-weight:bold;color:#222;text-align:center;line-height:14px">a</div>
<div style="position:absolute;left:17.0px;top:24.0px;width:311.0px;height:142.0px;border-left:1px solid #8c8c8c;border-top:1px solid #a2a2a2;background:linear-gradient(#ffffff 0,#fdfdfd 8px,#e9e9e9 22px,#ffffff 23px)"></div>
<div style="position:absolute;left:153.0px;top:28.0px;width:16.0px;height:16.0px;border:1px solid #b0d8a0;overflow:hidden"><div style="position:absolute;left:-1px;top:-1px;width:16px;height:16px"><svg width="16" height="16" viewBox="0 0 16 16"><rect width="16" height="16" fill="#c9ecb8"/><circle cx="8" cy="8" r="6.6" fill="#70c848" stroke="#52ae30" stroke-width="1.3"/><path d="M8 2.8L12 7.4H9.6V12.6H6.4V7.4H4Z" fill="#fff"/></svg></div></div>
<div style="position:absolute;left:172.0px;top:28.0px;width:16.0px;height:16.0px;border:1px solid #b0d8a0;overflow:hidden"><div style="position:absolute;left:-1px;top:-1px;width:16px;height:16px"><svg width="16" height="16" viewBox="0 0 16 16"><rect width="16" height="16" fill="#c9ecb8"/><circle cx="8" cy="8" r="6.6" fill="#70c848" stroke="#52ae30" stroke-width="1.3"/><path d="M8 13.2L12 8.6H9.6V3.4H6.4V8.6H4Z" fill="#fff"/></svg></div></div>
<div style="position:absolute;left:191.0px;top:28.0px;width:16.0px;height:16.0px;border:1px solid #aab5c4;background:linear-gradient(#f6f8fb,#d9e1ed);overflow:hidden;border-radius:1px"><div style="position:absolute;left:-1px;top:-1px;width:16px;height:16px"><svg width="16" height="16" viewBox="0 0 16 16"><path d="M5.5 6.5h5M5.5 9h5" stroke="#222" stroke-width="1.3"/></svg></div></div>
<div style="position:absolute;left:210.0px;top:28.0px;width:16.0px;height:16.0px;border:1px solid #aab5c4;background:linear-gradient(#f6f8fb,#d9e1ed);overflow:hidden;border-radius:1px"><div style="position:absolute;left:-1px;top:-1px;width:16px;height:16px"><svg width="16" height="16" viewBox="0 0 16 16"><path d="M8 4.2L11.6 11H4.4Z" fill="#111"/></svg></div></div>
<div style="position:absolute;left:229.0px;top:28.0px;width:16.0px;height:16.0px;border:1px solid #aab5c4;background:linear-gradient(#f6f8fb,#d9e1ed);overflow:hidden;border-radius:1px"><div style="position:absolute;left:-1px;top:-1px;width:16px;height:16px"><svg width="16" height="16" viewBox="0 0 16 16"><path d="M4.6 5.2H11.4V7H10.2L8 11L5.8 7H4.6Z" fill="#111"/></svg></div></div>
<div style="position:absolute;left:248.0px;top:28.0px;width:16.0px;height:16.0px;border:1px solid #aab5c4;background:linear-gradient(#f6f8fb,#d9e1ed);overflow:hidden;border-radius:1px"><div style="position:absolute;left:-1px;top:-1px;width:16px;height:16px"><svg width="16" height="16" viewBox="0 0 16 16"><path d="M4.5 8.5h7" stroke="#222" stroke-width="1.3"/></svg></div></div>
<div style="position:absolute;left:267.0px;top:28.0px;width:16.0px;height:16.0px;border:1px solid #aab5c4;background:linear-gradient(#f6f8fb,#d9e1ed);overflow:hidden;border-radius:1px"><div style="position:absolute;left:-1px;top:-1px;width:16px;height:16px"><svg width="16" height="16" viewBox="0 0 16 16"><path d="M4.5 8.5h7M8 5v7" stroke="#222" stroke-width="1.3"/></svg></div></div>
<div style="position:absolute;left:286.0px;top:28.0px;width:16.0px;height:16.0px;border:1px solid #aab5c4;background:linear-gradient(#f6f8fb,#d9e1ed);overflow:hidden;border-radius:1px"><div style="position:absolute;left:-1px;top:-1px;width:16px;height:16px"><svg width="16" height="16" viewBox="0 0 16 16"><path d="M8 4.5v7M5 6l6 4.5M11 6l-6 4.5" stroke="#111" stroke-width="1.3"/></svg></div></div>
<div style="position:absolute;left:305.0px;top:28.0px;width:16.0px;height:16.0px;border:1px solid #aab5c4;background:linear-gradient(#f6f8fb,#d9e1ed);overflow:hidden;border-radius:1px"><div style="position:absolute;left:-1px;top:-1px;width:16px;height:16px"><svg width="16" height="16" viewBox="0 0 16 16"><path d="M4 12L7.5 8.5" stroke="#d0202c" stroke-width="2.6" stroke-linecap="round"/><path d="M7.5 8.5L12 4" stroke="#2a2ab0" stroke-width="2.6" stroke-linecap="round"/></svg></div></div>
<div style="position:absolute;left:20.6px;top:48.7px;width:32.4px;height:11.8px;background:#c9c9c9;border-right:1px solid #9a9a9a;border-bottom:1px solid #8f8f8f;font-size:11.5px;line-height:11.3px;color:#333;text-align:center">200</div>
<div style="position:absolute;left:54.3px;top:47.9px;width:33.5px;height:12.7px;background:#8282f2;border-left:1px solid rgba(40,40,90,.2);border-top:1px solid rgba(40,40,90,.2);font-size:11.5px;line-height:12.7px;color:#17173f;-webkit-text-stroke:0.25px #17173f;text-align:center">11.5</div>
<div style="position:absolute;left:87.8px;top:47.9px;width:33.5px;height:12.7px;background:#8282f2;border-left:1px solid rgba(40,40,90,.2);border-top:1px solid rgba(40,40,90,.2);font-size:11.5px;line-height:12.7px;color:#17173f;-webkit-text-stroke:0.25px #17173f;text-align:center">11.5</div>
<div style="position:absolute;left:121.2px;top:47.9px;width:33.5px;height:12.7px;background:#8282f2;border-left:1px solid rgba(40,40,90,.2);border-top:1px solid rgba(40,40,90,.2);font-size:11.5px;line-height:12.7px;color:#17173f;-webkit-text-stroke:0.25px #17173f;text-align:center">11.5</div>
<div style="position:absolute;left:154.6px;top:47.9px;width:33.5px;height:12.7px;background:#8282f2;border-left:1px solid rgba(40,40,90,.2);border-top:1px solid rgba(40,40,90,.2);font-size:11.5px;line-height:12.7px;color:#17173f;-webkit-text-stroke:0.25px #17173f;text-align:center">11.5</div>
<div style="position:absolute;left:188.1px;top:47.9px;width:33.5px;height:12.7px;background:#8282f2;border-left:1px solid rgba(40,40,90,.2);border-top:1px solid rgba(40,40,90,.2);font-size:11.5px;line-height:12.7px;color:#17173f;-webkit-text-stroke:0.25px #17173f;text-align:center">11.5</div>
<div style="position:absolute;left:221.5px;top:47.9px;width:33.5px;height:12.7px;background:#8282f2;border-left:1px solid rgba(40,40,90,.2);border-top:1px solid rgba(40,40,90,.2);font-size:11.5px;line-height:12.7px;color:#17173f;-webkit-text-stroke:0.25px #17173f;text-align:center">11.5</div>
<div style="position:absolute;left:255.0px;top:47.9px;width:33.5px;height:12.7px;background:#8282f2;border-left:1px solid rgba(40,40,90,.2);border-top:1px solid rgba(40,40,90,.2);font-size:11.5px;line-height:12.7px;color:#17173f;-webkit-text-stroke:0.25px #17173f;text-align:center">11.5</div>
<div style="position:absolute;left:288.5px;top:47.9px;width:33.5px;height:12.7px;background:#8282f2;border-left:1px solid rgba(40,40,90,.2);border-top:1px solid rgba(40,40,90,.2);font-size:11.5px;line-height:12.7px;color:#17173f;-webkit-text-stroke:0.25px #17173f;text-align:center">11.5</div>
<div style="position:absolute;left:20.6px;top:61.4px;width:32.4px;height:11.8px;background:#c9c9c9;border-right:1px solid #9a9a9a;border-bottom:1px solid #8f8f8f;font-size:11.5px;line-height:11.3px;color:#333;text-align:center">175</div>
<div style="position:absolute;left:54.3px;top:60.6px;width:33.5px;height:12.7px;background:#7d8eec;border-left:1px solid rgba(40,40,90,.2);border-top:1px solid rgba(40,40,90,.2);font-size:11.5px;line-height:12.7px;color:#17173f;-webkit-text-stroke:0.25px #17173f;text-align:center">11.8</div>
<div style="position:absolute;left:87.8px;top:60.6px;width:33.5px;height:12.7px;background:#7d8eec;border-left:1px solid rgba(40,40,90,.2);border-top:1px solid rgba(40,40,90,.2);font-size:11.5px;line-height:12.7px;color:#17173f;-webkit-text-stroke:0.25px #17173f;text-align:center">11.8</div>
<div style="position:absolute;left:121.2px;top:60.6px;width:33.5px;height:12.7px;background:#7d8eec;border-left:1px solid rgba(40,40,90,.2);border-top:1px solid rgba(40,40,90,.2);font-size:11.5px;line-height:12.7px;color:#17173f;-webkit-text-stroke:0.25px #17173f;text-align:center">11.8</div>
<div style="position:absolute;left:154.6px;top:60.6px;width:33.5px;height:12.7px;background:#7d8eec;border-left:1px solid rgba(40,40,90,.2);border-top:1px solid rgba(40,40,90,.2);font-size:11.5px;line-height:12.7px;color:#17173f;-webkit-text-stroke:0.25px #17173f;text-align:center">11.8</div>
<div style="position:absolute;left:188.1px;top:60.6px;width:33.5px;height:12.7px;background:#7d8eec;border-left:1px solid rgba(40,40,90,.2);border-top:1px solid rgba(40,40,90,.2);font-size:11.5px;line-height:12.7px;color:#17173f;-webkit-text-stroke:0.25px #17173f;text-align:center">11.8</div>
<div style="position:absolute;left:221.5px;top:60.6px;width:33.5px;height:12.7px;background:#7d8eec;border-left:1px solid rgba(40,40,90,.2);border-top:1px solid rgba(40,40,90,.2);font-size:11.5px;line-height:12.7px;color:#17173f;-webkit-text-stroke:0.25px #17173f;text-align:center">11.8</div>
<div style="position:absolute;left:255.0px;top:60.6px;width:33.5px;height:12.7px;background:#7d8eec;border-left:1px solid rgba(40,40,90,.2);border-top:1px solid rgba(40,40,90,.2);font-size:11.5px;line-height:12.7px;color:#17173f;-webkit-text-stroke:0.25px #17173f;text-align:center">11.8</div>
<div style="position:absolute;left:288.5px;top:60.6px;width:33.5px;height:12.7px;background:#7d8eec;border-left:1px solid rgba(40,40,90,.2);border-top:1px solid rgba(40,40,90,.2);font-size:11.5px;line-height:12.7px;color:#17173f;-webkit-text-stroke:0.25px #17173f;text-align:center">11.8</div>
<div style="position:absolute;left:20.6px;top:74.0px;width:32.4px;height:11.8px;background:#c9c9c9;border-right:1px solid #9a9a9a;border-bottom:1px solid #8f8f8f;font-size:11.5px;line-height:11.3px;color:#333;text-align:center">150</div>
<div style="position:absolute;left:54.3px;top:73.2px;width:33.5px;height:12.7px;background:#7da6e2;border-left:1px solid rgba(40,40,90,.2);border-top:1px solid rgba(40,40,90,.2);font-size:11.5px;line-height:12.7px;color:#17173f;-webkit-text-stroke:0.25px #17173f;text-align:center">12.2</div>
<div style="position:absolute;left:87.8px;top:73.2px;width:33.5px;height:12.7px;background:#7da6e2;border-left:1px solid rgba(40,40,90,.2);border-top:1px solid rgba(40,40,90,.2);font-size:11.5px;line-height:12.7px;color:#17173f;-webkit-text-stroke:0.25px #17173f;text-align:center">12.2</div>
<div style="position:absolute;left:121.2px;top:73.2px;width:33.5px;height:12.7px;background:#7da6e2;border-left:1px solid rgba(40,40,90,.2);border-top:1px solid rgba(40,40,90,.2);font-size:11.5px;line-height:12.7px;color:#17173f;-webkit-text-stroke:0.25px #17173f;text-align:center">12.2</div>
<div style="position:absolute;left:154.6px;top:73.2px;width:33.5px;height:12.7px;background:#7da6e2;border-left:1px solid rgba(40,40,90,.2);border-top:1px solid rgba(40,40,90,.2);font-size:11.5px;line-height:12.7px;color:#17173f;-webkit-text-stroke:0.25px #17173f;text-align:center">12.2</div>
<div style="position:absolute;left:188.1px;top:73.2px;width:33.5px;height:12.7px;background:#7da6e2;border-left:1px solid rgba(40,40,90,.2);border-top:1px solid rgba(40,40,90,.2);font-size:11.5px;line-height:12.7px;color:#17173f;-webkit-text-stroke:0.25px #17173f;text-align:center">12.2</div>
<div style="position:absolute;left:221.5px;top:73.2px;width:33.5px;height:12.7px;background:#7da6e2;border-left:1px solid rgba(40,40,90,.2);border-top:1px solid rgba(40,40,90,.2);font-size:11.5px;line-height:12.7px;color:#17173f;-webkit-text-stroke:0.25px #17173f;text-align:center">12.2</div>
<div style="position:absolute;left:255.0px;top:73.2px;width:33.5px;height:12.7px;background:#7da6e2;border-left:1px solid rgba(40,40,90,.2);border-top:1px solid rgba(40,40,90,.2);font-size:11.5px;line-height:12.7px;color:#17173f;-webkit-text-stroke:0.25px #17173f;text-align:center">12.2</div>
<div style="position:absolute;left:288.5px;top:73.2px;width:33.5px;height:12.7px;background:#7da6e2;border-left:1px solid rgba(40,40,90,.2);border-top:1px solid rgba(40,40,90,.2);font-size:11.5px;line-height:12.7px;color:#17173f;-webkit-text-stroke:0.25px #17173f;text-align:center">12.2</div>
<div style="position:absolute;left:20.6px;top:86.7px;width:32.4px;height:11.8px;background:#c9c9c9;border-right:1px solid #9a9a9a;border-bottom:1px solid #8f8f8f;font-size:11.5px;line-height:11.3px;color:#333;text-align:center">125</div>
<div style="position:absolute;left:54.3px;top:85.9px;width:33.5px;height:12.7px;background:#78bcc9;border-left:1px solid rgba(40,40,90,.2);border-top:1px solid rgba(40,40,90,.2);font-size:11.5px;line-height:12.7px;color:#17173f;-webkit-text-stroke:0.25px #17173f;text-align:center">12.6</div>
<div style="position:absolute;left:87.8px;top:85.9px;width:33.5px;height:12.7px;background:#78bcc9;border-left:1px solid rgba(40,40,90,.2);border-top:1px solid rgba(40,40,90,.2);font-size:11.5px;line-height:12.7px;color:#17173f;-webkit-text-stroke:0.25px #17173f;text-align:center">12.6</div>
<div style="position:absolute;left:121.2px;top:85.9px;width:33.5px;height:12.7px;background:#78bcc9;border-left:1px solid rgba(40,40,90,.2);border-top:1px solid rgba(40,40,90,.2);font-size:11.5px;line-height:12.7px;color:#17173f;-webkit-text-stroke:0.25px #17173f;text-align:center">12.6</div>
<div style="position:absolute;left:154.6px;top:85.9px;width:33.5px;height:12.7px;background:#78bcc9;border-left:1px solid rgba(40,40,90,.2);border-top:1px solid rgba(40,40,90,.2);font-size:11.5px;line-height:12.7px;color:#17173f;-webkit-text-stroke:0.25px #17173f;text-align:center">12.6</div>
<div style="position:absolute;left:188.1px;top:85.9px;width:33.5px;height:12.7px;background:#78bcc9;border-left:1px solid rgba(40,40,90,.2);border-top:1px solid rgba(40,40,90,.2);font-size:11.5px;line-height:12.7px;color:#17173f;-webkit-text-stroke:0.25px #17173f;text-align:center">12.6</div>
<div style="position:absolute;left:221.5px;top:85.9px;width:33.5px;height:12.7px;background:#78bcc9;border-left:1px solid rgba(40,40,90,.2);border-top:1px solid rgba(40,40,90,.2);font-size:11.5px;line-height:12.7px;color:#17173f;-webkit-text-stroke:0.25px #17173f;text-align:center">12.6</div>
<div style="position:absolute;left:255.0px;top:85.9px;width:33.5px;height:12.7px;background:#78bcc9;border-left:1px solid rgba(40,40,90,.2);border-top:1px solid rgba(40,40,90,.2);font-size:11.5px;line-height:12.7px;color:#17173f;-webkit-text-stroke:0.25px #17173f;text-align:center">12.6</div>
<div style="position:absolute;left:288.5px;top:85.9px;width:33.5px;height:12.7px;background:#78bcc9;border-left:1px solid rgba(40,40,90,.2);border-top:1px solid rgba(40,40,90,.2);font-size:11.5px;line-height:12.7px;color:#17173f;-webkit-text-stroke:0.25px #17173f;text-align:center">12.6</div>
<div style="position:absolute;left:20.6px;top:99.3px;width:32.4px;height:11.8px;background:#c9c9c9;border-right:1px solid #9a9a9a;border-bottom:1px solid #8f8f8f;font-size:11.5px;line-height:11.3px;color:#333;text-align:center">100</div>
<div style="position:absolute;left:54.3px;top:98.5px;width:33.5px;height:12.7px;background:#a8d68c;border-left:1px solid rgba(40,40,90,.2);border-top:1px solid rgba(40,40,90,.2);font-size:11.5px;line-height:12.7px;color:#c0501a;-webkit-text-stroke:0.25px #c0501a;text-align:center">14.2</div>
<div style="position:absolute;left:87.8px;top:98.5px;width:33.5px;height:12.7px;background:#a8d68c;border-left:1px solid rgba(40,40,90,.2);border-top:1px solid rgba(40,40,90,.2);font-size:11.5px;line-height:12.7px;color:#c0501a;-webkit-text-stroke:0.25px #c0501a;text-align:center">14.2</div>
<div style="position:absolute;left:121.2px;top:98.5px;width:33.5px;height:12.7px;background:#a8d68c;border-left:1px solid rgba(40,40,90,.2);border-top:1px solid rgba(40,40,90,.2);font-size:11.5px;line-height:12.7px;color:#20200a;-webkit-text-stroke:0.25px #20200a;text-align:center">14.2</div>
<div style="position:absolute;left:154.6px;top:98.5px;width:33.5px;height:12.7px;background:#a8d68c;border-left:1px solid rgba(40,40,90,.2);border-top:1px solid rgba(40,40,90,.2);font-size:11.5px;line-height:12.7px;color:#20200a;-webkit-text-stroke:0.25px #20200a;text-align:center">14.2</div>
<div style="position:absolute;left:188.1px;top:98.5px;width:33.5px;height:12.7px;background:#a8d68c;border-left:1px solid rgba(40,40,90,.2);border-top:1px solid rgba(40,40,90,.2);font-size:11.5px;line-height:12.7px;color:#20200a;-webkit-text-stroke:0.25px #20200a;text-align:center">14.2</div>
<div style="position:absolute;left:221.5px;top:98.5px;width:33.5px;height:12.7px;background:#a8d68c;border-left:1px solid rgba(40,40,90,.2);border-top:1px solid rgba(40,40,90,.2);font-size:11.5px;line-height:12.7px;color:#20200a;-webkit-text-stroke:0.25px #20200a;text-align:center">14.2</div>
<div style="position:absolute;left:255.0px;top:98.5px;width:33.5px;height:12.7px;background:#a8d68c;border-left:1px solid rgba(40,40,90,.2);border-top:1px solid rgba(40,40,90,.2);font-size:11.5px;line-height:12.7px;color:#20200a;-webkit-text-stroke:0.25px #20200a;text-align:center">14.2</div>
<div style="position:absolute;left:288.5px;top:98.5px;width:33.5px;height:12.7px;background:#78bcc9;border-left:1px solid rgba(40,40,90,.2);border-top:1px solid rgba(40,40,90,.2);font-size:11.5px;line-height:12.7px;color:#17173f;-webkit-text-stroke:0.25px #17173f;text-align:center">12.6</div>
<div style="position:absolute;left:20.6px;top:112.0px;width:32.4px;height:11.8px;background:#c9c9c9;border-right:1px solid #9a9a9a;border-bottom:1px solid #8f8f8f;font-size:11.5px;line-height:11.3px;color:#333;text-align:center">75</div>
<div style="position:absolute;left:54.3px;top:111.2px;width:33.5px;height:12.7px;background:#f58a78;border-left:1px solid rgba(40,40,90,.2);border-top:1px solid rgba(40,40,90,.2);font-size:11.5px;line-height:12.7px;color:#d4141a;-webkit-text-stroke:0.25px #d4141a;text-align:center">15.0</div>
<div style="position:absolute;left:87.8px;top:111.2px;width:33.5px;height:12.7px;background:#f58a78;border-left:1px solid rgba(40,40,90,.2);border-top:1px solid rgba(40,40,90,.2);font-size:11.5px;line-height:12.7px;color:#d4141a;-webkit-text-stroke:0.25px #d4141a;text-align:center">15.0</div>
<div style="position:absolute;left:121.2px;top:111.2px;width:33.5px;height:12.7px;background:#d9b486;border-left:1px solid rgba(40,40,90,.2);border-top:1px solid rgba(40,40,90,.2);font-size:11.5px;line-height:12.7px;color:#20200a;-webkit-text-stroke:0.25px #20200a;text-align:center">14.7</div>
<div style="position:absolute;left:154.6px;top:111.2px;width:33.5px;height:12.7px;background:#fb858c;border-left:1px solid rgba(40,40,90,.2);border-top:1px solid rgba(40,40,90,.2);font-size:11.5px;line-height:12.7px;color:#5a0f1e;-webkit-text-stroke:0.25px #5a0f1e;text-align:center">15.5</div>
<div style="position:absolute;left:188.1px;top:111.2px;width:33.5px;height:12.7px;background:#fb858c;border-left:1px solid rgba(40,40,90,.2);border-top:1px solid rgba(40,40,90,.2);font-size:11.5px;line-height:12.7px;color:#5a0f1e;-webkit-text-stroke:0.25px #5a0f1e;text-align:center">15.5</div>
<div style="position:absolute;left:221.5px;top:111.2px;width:33.5px;height:12.7px;background:#fb858c;border-left:1px solid rgba(40,40,90,.2);border-top:1px solid rgba(40,40,90,.2);font-size:11.5px;line-height:12.7px;color:#5a0f1e;-webkit-text-stroke:0.25px #5a0f1e;text-align:center">15.5</div>
<div style="position:absolute;left:255.0px;top:111.2px;width:33.5px;height:12.7px;background:#d9b486;border-left:1px solid rgba(40,40,90,.2);border-top:1px solid rgba(40,40,90,.2);font-size:11.5px;line-height:12.7px;color:#20200a;-webkit-text-stroke:0.25px #20200a;text-align:center">14.7</div>
<div style="position:absolute;left:288.5px;top:111.2px;width:33.5px;height:12.7px;background:#78c8a8;border-left:1px solid rgba(40,40,90,.2);border-top:1px solid rgba(40,40,90,.2);font-size:11.5px;line-height:12.7px;color:#10301c;-webkit-text-stroke:0.25px #10301c;text-align:center">12.8</div>
<div style="position:absolute;left:20.6px;top:124.7px;width:32.4px;height:11.8px;background:#c9c9c9;border-right:1px solid #9a9a9a;border-bottom:1px solid #8f8f8f;font-size:11.5px;line-height:11.3px;color:#333;text-align:center">50</div>
<div style="position:absolute;left:54.3px;top:123.9px;width:33.5px;height:12.7px;background:#f58a78;border-left:1px solid rgba(40,40,90,.2);border-top:1px solid rgba(40,40,90,.2);font-size:11.5px;line-height:12.7px;color:#d4141a;-webkit-text-stroke:0.25px #d4141a;text-align:center">15.0</div>
<div style="position:absolute;left:87.8px;top:123.9px;width:33.5px;height:12.7px;background:#f58a78;border-left:1px solid rgba(40,40,90,.2);border-top:1px solid rgba(40,40,90,.2);font-size:11.5px;line-height:12.7px;color:#d4141a;-webkit-text-stroke:0.25px #d4141a;text-align:center">15.0</div>
<div style="position:absolute;left:121.2px;top:123.9px;width:33.5px;height:12.7px;background:#d9b486;border-left:1px solid rgba(40,40,90,.2);border-top:1px solid rgba(40,40,90,.2);font-size:11.5px;line-height:12.7px;color:#20200a;-webkit-text-stroke:0.25px #20200a;text-align:center">14.7</div>
<div style="position:absolute;left:154.6px;top:123.9px;width:33.5px;height:12.7px;background:#fb858c;border-left:1px solid rgba(40,40,90,.2);border-top:1px solid rgba(40,40,90,.2);font-size:11.5px;line-height:12.7px;color:#5a0f1e;-webkit-text-stroke:0.25px #5a0f1e;text-align:center">15.5</div>
<div style="position:absolute;left:188.1px;top:123.9px;width:33.5px;height:12.7px;background:#fb858c;border-left:1px solid rgba(40,40,90,.2);border-top:1px solid rgba(40,40,90,.2);font-size:11.5px;line-height:12.7px;color:#5a0f1e;-webkit-text-stroke:0.25px #5a0f1e;text-align:center">15.5</div>
<div style="position:absolute;left:221.5px;top:123.9px;width:33.5px;height:12.7px;background:#fb858c;border-left:1px solid rgba(40,40,90,.2);border-top:1px solid rgba(40,40,90,.2);font-size:11.5px;line-height:12.7px;color:#5a0f1e;-webkit-text-stroke:0.25px #5a0f1e;text-align:center">15.5</div>
<div style="position:absolute;left:255.0px;top:123.9px;width:33.5px;height:12.7px;background:#d9b486;border-left:1px solid rgba(40,40,90,.2);border-top:1px solid rgba(40,40,90,.2);font-size:11.5px;line-height:12.7px;color:#20200a;-webkit-text-stroke:0.25px #20200a;text-align:center">14.7</div>
<div style="position:absolute;left:288.5px;top:123.9px;width:33.5px;height:12.7px;background:#78d096;border-left:1px solid rgba(40,40,90,.2);border-top:1px solid rgba(40,40,90,.2);font-size:11.5px;line-height:12.7px;color:#10301c;-webkit-text-stroke:0.25px #10301c;text-align:center">13.0</div>
<div style="position:absolute;left:20.6px;top:137.3px;width:32.4px;height:11.8px;background:#c9c9c9;border-right:1px solid #9a9a9a;border-bottom:1px solid #8f8f8f;font-size:11.5px;line-height:11.3px;color:#333;text-align:center">25</div>
<div style="position:absolute;left:54.3px;top:136.5px;width:33.5px;height:12.7px;background:#f58a78;border-left:1px solid rgba(40,40,90,.2);border-top:1px solid rgba(40,40,90,.2);font-size:11.5px;line-height:12.7px;color:#d4141a;-webkit-text-stroke:0.25px #d4141a;text-align:center">15.0</div>
<div style="position:absolute;left:87.8px;top:136.5px;width:33.5px;height:12.7px;background:#f58a78;border-left:1px solid rgba(40,40,90,.2);border-top:1px solid rgba(40,40,90,.2);font-size:11.5px;line-height:12.7px;color:#d4141a;-webkit-text-stroke:0.25px #d4141a;text-align:center">15.0</div>
<div style="position:absolute;left:121.2px;top:136.5px;width:33.5px;height:12.7px;background:#d9b486;border-left:1px solid rgba(40,40,90,.2);border-top:1px solid rgba(40,40,90,.2);font-size:11.5px;line-height:12.7px;color:#20200a;-webkit-text-stroke:0.25px #20200a;text-align:center">14.7</div>
<div style="position:absolute;left:154.6px;top:136.5px;width:33.5px;height:12.7px;background:#d9b486;border-left:1px solid rgba(40,40,90,.2);border-top:1px solid rgba(40,40,90,.2);font-size:11.5px;line-height:12.7px;color:#20200a;-webkit-text-stroke:0.25px #20200a;text-align:center">14.7</div>
<div style="position:absolute;left:188.1px;top:136.5px;width:33.5px;height:12.7px;background:#d9b486;border-left:1px solid rgba(40,40,90,.2);border-top:1px solid rgba(40,40,90,.2);font-size:11.5px;line-height:12.7px;color:#20200a;-webkit-text-stroke:0.25px #20200a;text-align:center">14.7</div>
<div style="position:absolute;left:221.5px;top:136.5px;width:33.5px;height:12.7px;background:#d9b486;border-left:1px solid rgba(40,40,90,.2);border-top:1px solid rgba(40,40,90,.2);font-size:11.5px;line-height:12.7px;color:#20200a;-webkit-text-stroke:0.25px #20200a;text-align:center">14.7</div>
<div style="position:absolute;left:255.0px;top:136.5px;width:33.5px;height:12.7px;background:#d9b486;border-left:1px solid rgba(40,40,90,.2);border-top:1px solid rgba(40,40,90,.2);font-size:11.5px;line-height:12.7px;color:#20200a;-webkit-text-stroke:0.25px #20200a;text-align:center">14.7</div>
<div style="position:absolute;left:288.5px;top:136.5px;width:33.5px;height:12.7px;background:#d9b486;border-left:1px solid rgba(40,40,90,.2);border-top:1px solid rgba(40,40,90,.2);font-size:11.5px;line-height:12.7px;color:#20200a;-webkit-text-stroke:0.25px #20200a;text-align:center">14.7</div>
<div style="position:absolute;left:20.6px;top:149.2px;width:33.0px;height:15.0px;background:#c6c6c6"></div>
<div style="position:absolute;left:55.5px;top:149.2px;width:31.3px;height:14.5px;background:#c9c9c9;border-right:1px solid #9a9a9a;border-bottom:1px solid #8f8f8f;font-size:11.5px;line-height:14px;color:#333;text-align:center">500</div>
<div style="position:absolute;left:88.9px;top:149.2px;width:31.3px;height:14.5px;background:#c9c9c9;border-right:1px solid #9a9a9a;border-bottom:1px solid #8f8f8f;font-size:11.5px;line-height:14px;color:#333;text-align:center">1000</div>
<div style="position:absolute;left:122.4px;top:149.2px;width:31.3px;height:14.5px;background:#c9c9c9;border-right:1px solid #9a9a9a;border-bottom:1px solid #8f8f8f;font-size:11.5px;line-height:14px;color:#333;text-align:center">2000</div>
<div style="position:absolute;left:155.9px;top:149.2px;width:31.3px;height:14.5px;background:#c9c9c9;border-right:1px solid #9a9a9a;border-bottom:1px solid #8f8f8f;font-size:11.5px;line-height:14px;color:#333;text-align:center">3000</div>
<div style="position:absolute;left:189.3px;top:149.2px;width:31.3px;height:14.5px;background:#c9c9c9;border-right:1px solid #9a9a9a;border-bottom:1px solid #8f8f8f;font-size:11.5px;line-height:14px;color:#333;text-align:center">4000</div>
<div style="position:absolute;left:222.8px;top:149.2px;width:31.3px;height:14.5px;background:#c9c9c9;border-right:1px solid #9a9a9a;border-bottom:1px solid #8f8f8f;font-size:11.5px;line-height:14px;color:#333;text-align:center">5000</div>
<div style="position:absolute;left:256.2px;top:149.2px;width:31.3px;height:14.5px;background:#c9c9c9;border-right:1px solid #9a9a9a;border-bottom:1px solid #8f8f8f;font-size:11.5px;line-height:14px;color:#333;text-align:center">6000</div>
<div style="position:absolute;left:289.7px;top:149.2px;width:31.3px;height:14.5px;background:#c9c9c9;border-right:1px solid #9a9a9a;border-bottom:1px solid #8f8f8f;font-size:11.5px;line-height:14px;color:#333;text-align:center">7000</div>
<div style="position:absolute;left:134.0px;top:168.5px;width:60.0px;height:14.0px;font-size:11px;font-weight:bold;color:#333;text-align:center;line-height:14px">rpm</div>
<div style="position:absolute;left:79.0px;top:188.0px;width:59.5px;height:28.5px;border:1px solid #a4a4a4;border-radius:1px;background:#efefef;box-shadow:inset 0 0 0 1px #f6f6f6"><svg width="24" height="22" viewBox="0 0 24 22" style="position:absolute;left:17px;top:3px"><path d="M19.500 20C19.500 12 17 7.500 9 7.500" fill="none" stroke="#c6c6c6" stroke-width="6.500"/><path d="M10.500 1L1.500 7.500L10.500 14Z" fill="#c6c6c6"/><path d="M17 19.500C17 13 15 9 9 8.500" fill="none" stroke="#d4d4d4" stroke-width="1.500"/></svg></div>
<div style="position:absolute;left:140.5px;top:188.0px;width:59.5px;height:28.5px;border:1px solid #a4a4a4;border-radius:1px;background:#efefef;box-shadow:inset 0 0 0 1px #f6f6f6"><svg width="24" height="22" viewBox="0 0 24 22" style="position:absolute;left:18px;top:3px"><path d="M4.500 20C4.500 12 7 7.500 15 7.500" fill="none" stroke="#c6c6c6" stroke-width="6.500"/><path d="M13.500 1L22.500 7.500L13.500 14Z" fill="#c6c6c6"/><path d="M7 19.500C7 13 9 9 15 8.500" fill="none" stroke="#d4d4d4" stroke-width="1.500"/></svg></div>
<div style="position:absolute;left:202.3px;top:188.0px;width:59.5px;height:28.5px;border:1px solid #8a9bb2;border-radius:2px;background:linear-gradient(#fbfdff 0%,#e6eef8 45%,#cdddf0 55%,#dde8f6 100%);box-shadow:inset 0 0 0 1px rgba(255,255,255,.7);font-size:11px;font-weight:bold;color:#333;text-align:center;line-height:27px"><u>B</u>urn</div>
<div style="position:absolute;left:264.0px;top:188.0px;width:59.5px;height:28.5px;border:1px solid #8a9bb2;border-radius:2px;background:linear-gradient(#fbfdff 0%,#e6eef8 45%,#cdddf0 55%,#dde8f6 100%);box-shadow:inset 0 0 0 1px rgba(255,255,255,.7);font-size:11px;font-weight:bold;color:#333;text-align:center;line-height:27px"><u>C</u>lose</div>
</div>
</div>
</body>
</html>
